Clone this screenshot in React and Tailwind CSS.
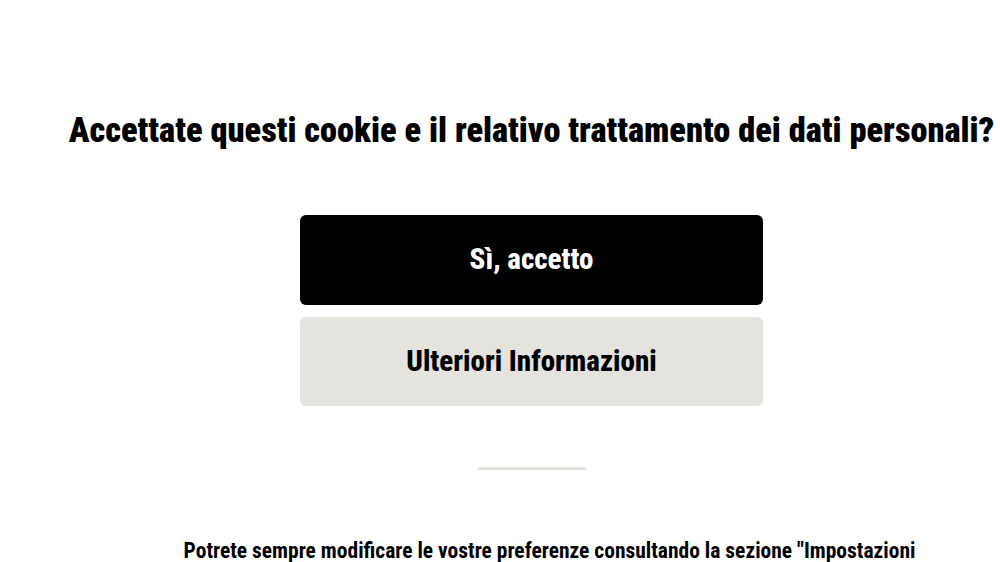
export default function App() {
  return (
    <div className="min-h-screen overflow-hidden bg-white font-['Roboto_Condensed','Open_Sans_Condensed',sans-serif] font-bold text-black">
      <div className="flex flex-col items-center pt-[108px] pl-[63px]">
        <h1 className="whitespace-nowrap text-[34.4px] font-black leading-[44px]">
          Accettate questi cookie e il relativo trattamento dei dati personali?
        </h1>
        <div className="mt-[63px] flex w-[463px] flex-col gap-3">
          <button className="h-[90px] rounded-md bg-black text-[29px] font-extrabold text-white">
            Sì, accetto
          </button>
          <button className="h-[89px] rounded-md bg-[#e4e3de] text-[29px] font-extrabold text-black">
            Ulteriori Informazioni
          </button>
        </div>
        <div className="mt-[61px] h-[3px] w-[108px] bg-[#e4e3de]" />
        <p className="mt-[68px] ml-[36px] w-[770px] text-center text-[21.5px] leading-[26px]">
          Potrete sempre modificare le vostre preferenze consultando la sezione "Impostazioni cookie" in fondo alla pagina.
        </p>
      </div>
    </div>
  );
}
